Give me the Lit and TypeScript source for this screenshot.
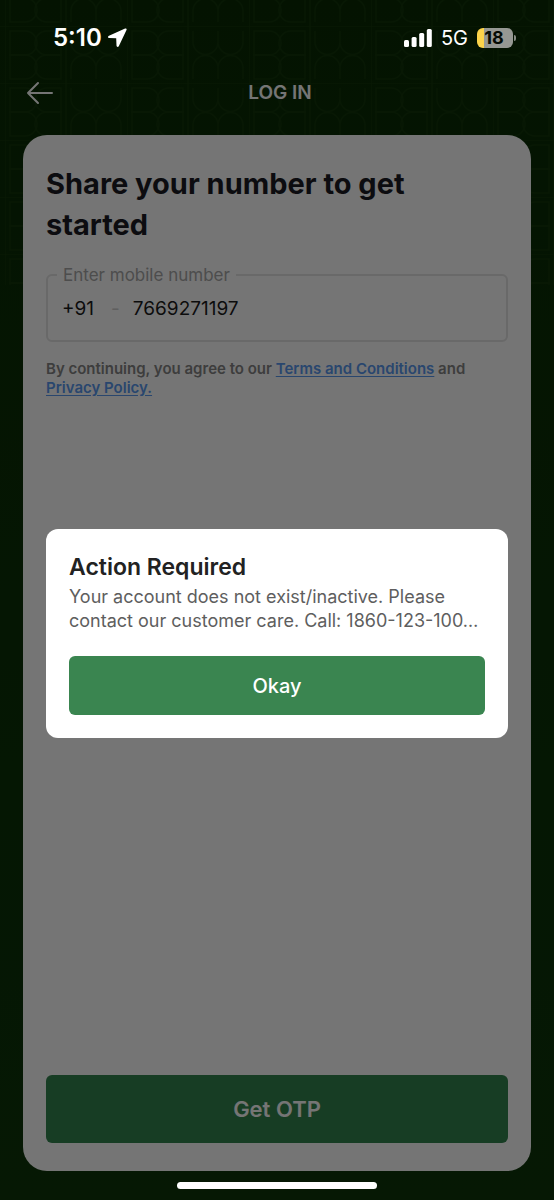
import { LitElement, html, css } from "lit";
import { customElement, state } from "lit/decorators.js";

@customElement("status-bar")
class StatusBar extends LitElement {
  static styles = css`
    :host {
      display: flex;
      justify-content: space-between;
      align-items: center;
      height: 75px;
      box-sizing: border-box;
      padding: 0 38px 0 53px;
      color: #fff;
      font-family: Inter, "Liberation Sans", sans-serif;
    }
    .group { display: flex; align-items: center; }
    .left { gap: 6px; }
    .right { gap: 9px; }
    .time { font-size: 24px; line-height: 28px; font-weight: 600; }
    .network { font-size: 20px; line-height: 28px; font-weight: 400; }
    .battery { display: flex; align-items: center; gap: 1px; }
    .cell {
      width: 36px;
      height: 20px;
      box-sizing: border-box;
      padding-right: 2px;
      border-radius: 6px;
      background: linear-gradient(to right, #fcd34a 7px, #969893 7px);
      color: #050b04;
      font-size: 18px;
      line-height: 20px;
      font-weight: 700;
      text-align: center;
    }
    .cap { width: 2px; height: 6px; border-radius: 0 2px 2px 0; background: #888c85; }
    svg { display: block; }
  `;
  render() {
    return html`
      <div class="group left">
        <span class="time">5:10</span>
        <svg width="19" height="20" viewBox="0 0 19 20" fill="#fff" aria-hidden="true">
          <path d="M17.1 .6 1 7.7C-.5 8.400-.1 10 1.300 10.100L8.200 10.300 8.500 17.600C8.600 19.200 10.200 19.500 10.900 18.100L18.500 2C19 .9 18.100 .2 17.100 .6Z" />
        </svg>
      </div>
      <div class="group right">
        <svg width="28" height="18" viewBox="0 0 28 18" fill="#fff" aria-hidden="true">
          <rect x="0" y="11" width="5" height="7" rx="1.500" />
          <rect x="7.600" y="8" width="5" height="10" rx="1.500" />
          <rect x="15.200" y="4" width="5" height="14" rx="1.500" />
          <rect x="22.800" y="0" width="5" height="18" rx="1.500" />
        </svg>
        <span class="network">5G</span>
        <span class="battery"><span class="cell">18</span><span class="cap"></span></span>
      </div>
    `;
  }
}

@customElement("app-root")
class AppRoot extends LitElement {
  static styles = css`
    :host {
      display: block;
      font-family: Inter, "Liberation Sans", sans-serif;
    }
    .page {
      position: relative;
      display: flex;
      flex-direction: column;
      min-height: 100vh;
      background: linear-gradient(#092b04, #0e360a);
    }
    .pattern {
      position: absolute;
      inset: 0 0 auto 0;
      width: 100%;
      height: 285px;
    }
    status-bar { position: relative; z-index: 2; }
    .header {
      position: relative;
      display: grid;
      grid-template-columns: 1fr auto 1fr;
      align-items: center;
      height: 36px;
      margin-bottom: 24px;
      padding: 0 20px 0 26px;
      color: #fff;
    }
    .back { justify-self: start; padding: 0; border: 0; background: none; color: inherit; }
    .back svg { display: block; }
    .header h1 { margin: 0; font-size: 19px; line-height: 24px; font-weight: 600; }
    .card {
      position: relative;
      flex: 1;
      display: flex;
      flex-direction: column;
      margin: 0 23px;
      padding: 28px 23px;
      border-radius: 24px;
      background: #fff;
    }
    .card h2 { margin: 0; color: #1c1c24; font-size: 29px; line-height: 41px; font-weight: 700; }
    .field {
      display: flex;
      min-width: 0;
      height: 77px;
      box-sizing: border-box;
      margin: 20px 0 0;
      padding: 0 14px;
      border: 2px solid #e4e4e4;
      border-radius: 6px;
      color: #1c1c1c;
      font-size: 19px;
    }
    .field legend {
      margin-left: -5px;
      padding: 0 6px;
      color: #a8a8a8;
      font-size: 17px;
      line-height: 20px;
    }
    .row { display: flex; align-items: center; height: 46px; }
    .dash { margin: 0 13px 0 17px; color: #d0d0d0; }
    .row input {
      flex: 1;
      min-width: 0;
      padding: 0;
      border: 0;
      outline: 0;
      background: none;
      color: inherit;
      font: inherit;
    }
    .terms { margin: 17px 0 0; color: #868686; font-size: 15px; line-height: 19px; font-weight: 600; }
    .terms a { color: #5a9af0; text-underline-offset: 2px; }
    .otp {
      height: 68px;
      margin-top: auto;
      border: 0;
      border-radius: 6px;
      background: #34854f;
      color: #fff;
      font: inherit;
      font-size: 22px;
      font-weight: 600;
    }
    .home {
      position: relative;
      z-index: 2;
      align-self: center;
      width: 36%;
      height: 7px;
      margin: 11px 0;
      border-radius: 4px;
      background: #fff;
    }
    .scrim {
      position: absolute;
      inset: 0;
      z-index: 1;
      display: flex;
      align-items: center;
      padding: 67px 46px 0;
      background: rgb(0 0 0 / 54%);
    }
    .dialog {
      flex: 1;
      padding: 23px;
      border-radius: 12px;
      background: #fff;
    }
    .dialog h3 { margin: 0 0 3px; color: #222; font-size: 23px; line-height: 30px; font-weight: 600; }
    .dialog p { margin: 0; color: #5e5e5e; font-size: 18px; line-height: 24px; }
    .okay {
      display: block;
      width: 100%;
      height: 59px;
      margin-top: 23px;
      border: 0;
      border-radius: 6px;
      background: #3a8550;
      color: #fff;
      font: inherit;
      font-size: 20px;
      font-weight: 500;
    }
  `;

  @state() private open = true;

  render() {
    return html`
      <main class="page">
        <svg class="pattern" aria-hidden="true">
          <defs>
            <pattern id="tiles" width="122" height="57" patternUnits="userSpaceOnUse" patternTransform="translate(5 26)">
              <g fill="none" stroke="#123509" stroke-width="1.500">
                <path d="M0 0H122M0 0V57M61 0V57" />
                <path d="M5 5H20A12 12 0 0 1 20 29H5ZM56 5H42A12 12 0 0 0 42 29H56Z" />
                <path d="M5 29H20A12 12 0 0 1 20 53H5ZM56 29H42A12 12 0 0 0 42 53H56Z" />
                <path d="M66 5V16A12 12 0 0 0 91 16V5M91 5V16A12 12 0 0 0 116 16V5" />
                <path d="M66 53V42A12 12 0 0 1 91 42V53M91 53V42A12 12 0 0 1 116 42V53" />
              </g>
            </pattern>
          </defs>
          <rect width="100%" height="100%" fill="url(#tiles)" />
        </svg>
        <status-bar></status-bar>
        <header class="header">
          <button class="back" aria-label="Back">
            <svg width="28" height="24" viewBox="0 0 28 24" fill="none" stroke="currentColor" stroke-width="2" stroke-linecap="round" stroke-linejoin="round">
              <path d="M26 12H2M12 2 2 12 12 22" />
            </svg>
          </button>
          <h1>LOG IN</h1>
        </header>
        <section class="card">
          <h2>Share your number to get started</h2>
          <fieldset class="field">
            <legend><label for="mobile">Enter mobile number</label></legend>
            <div class="row">
              <span>+91</span><span class="dash">-</span>
              <input id="mobile" type="tel" value="7669271197" />
            </div>
          </fieldset>
          <p class="terms">
            By continuing, you agree to our <a href="#terms">Terms and Conditions</a> and
            <a href="#privacy">Privacy Policy.</a>
          </p>
          <button class="otp">Get OTP</button>
        </section>
        <div class="home"></div>
        ${this.open
          ? html`<div class="scrim">
              <div class="dialog" role="alertdialog" aria-labelledby="title" aria-describedby="message">
                <h3 id="title">Action Required</h3>
                <p id="message">Your account does not exist/inactive. Please contact our customer care. Call: 1860-123-100…</p>
                <button class="okay" @click=${() => (this.open = false)}>Okay</button>
              </div>
            </div>`
          : null}
      </main>
    `;
  }
}
